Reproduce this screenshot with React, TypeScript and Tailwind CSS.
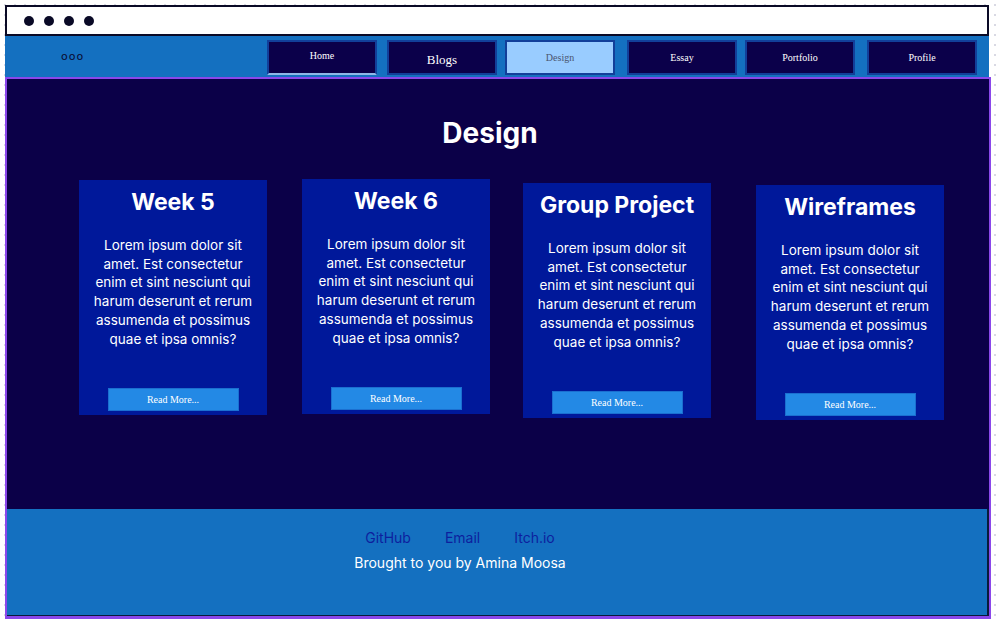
const navItems = [
  { label: "Home", cls: "bg-[#0b004a] text-white text-[10px] pb-[5px] border-b-[#8fb8e8]" },
  { label: "Blogs", cls: "bg-[#0b004a] text-white text-[13px] pt-[5px]" },
  { label: "Design", cls: "bg-[#99ccff] text-[#4a5570] text-[10px] border-[#5fa2e6]" },
  { label: "Essay", cls: "bg-[#0b004a] text-white text-[10px]" },
  { label: "Portfolio", cls: "bg-[#0b004a] text-white text-[10px]" },
  { label: "Profile", cls: "bg-[#0b004a] text-white text-[10px]" },
];

const cards = [
  { title: "Week 5", cls: "mt-[28px] ml-[1px]" },
  { title: "Week 6", cls: "mt-[27px] ml-[35px]" },
  { title: "Group Project", cls: "mt-[31px] ml-[33px]" },
  { title: "Wireframes", cls: "mt-[33px] ml-[45px]" },
];

const lorem =
  "Lorem ipsum dolor sit amet. Est consectetur enim et sint nesciunt qui harum deserunt et rerum assumenda et possimus quae et ipsa omnis?";

export default function App() {
  return (
    <div className="w-[997px] h-[620px] overflow-hidden bg-white bg-[radial-gradient(#d9d9e3_1px,transparent_1px)] bg-[length:10px_10px] font-['Inter',sans-serif]">
      <div className="pl-[5px] pt-[5px] w-[991px]">
        {/* browser bar */}
        <div className="h-[31px] w-[984px] border-2 border-[#0a0a26] bg-white flex items-center gap-[10px] pl-[17px]">
          {[0, 1, 2, 3].map((i) => (
            <span key={i} className="w-[10px] h-[10px] rounded-full bg-[#0a0a26]" />
          ))}
        </div>

        {/* nav */}
        <div className="h-[41px] w-[984px] bg-[#1470c0] flex items-center pt-[2px]">
          <span className="ml-[56px] w-[206px] text-[11px] tracking-[1px] text-[#0a0a30] font-['DejaVu_Sans',sans-serif]">
            ooo
          </span>
          <div className="flex gap-[10px]">
            {navItems.map((n, i) => (
              <div
                key={n.label}
                className={`w-[110px] h-[35px] flex justify-center items-center border-2 border-[#123f9a] font-['Liberation_Serif',serif] ${n.cls} ${i === 2 ? "ml-[-2px]" : ""} ${i === 3 ? "ml-[2px]" : ""} ${i === 4 ? "ml-[-2px]" : ""} ${i === 5 ? "ml-[2px]" : ""}`}
              >
                {n.label}
              </div>
            ))}
          </div>
        </div>

        {/* main + footer */}
        <div className="w-[986px] border-2 border-[#8a47ea] border-b-[3px]">
          <main className="h-[430px] bg-[#0b0048] pt-[34px]">
            <h1 className="text-center text-[28px] font-bold text-white leading-[40px] -ml-[16px]">Design</h1>
            <div className="flex items-start ml-[71px] -mt-[1px]">
              {cards.map((c) => (
                <div
                  key={c.title}
                  className={`w-[188px] h-[235px] bg-[#00189a] flex flex-col items-center pt-[7px] pb-[4px] ${c.cls}`}
                >
                  <h2 className="text-[23px] font-bold text-white leading-[30px]">{c.title}</h2>
                  <p className="mt-[19px] px-[13px] text-center text-[13.5px] leading-[18.7px] text-white">{lorem}</p>
                  <button className="mt-auto w-[131px] h-[23px] bg-[#2389e5] border border-[#1b6fd0] text-white text-[10px] font-['Liberation_Serif',serif]">
                    Read More...
                  </button>
                </div>
              ))}
            </div>
          </main>
          <footer className="h-[107px] bg-[#1470c0] border-r-2 border-b border-[#0a1a3a] flex flex-col items-center pt-[18px] pr-[74px]">
            <div className="flex gap-[34px] text-[14px] text-[#0d1f9e]">
              <a>GitHub</a>
              <a>Email</a>
              <a>Itch.io</a>
            </div>
            <p className="mt-[4px] text-[14px] text-white">Brought to you by Amina Moosa</p>
          </footer>
        </div>
      </div>
    </div>
  );
}
